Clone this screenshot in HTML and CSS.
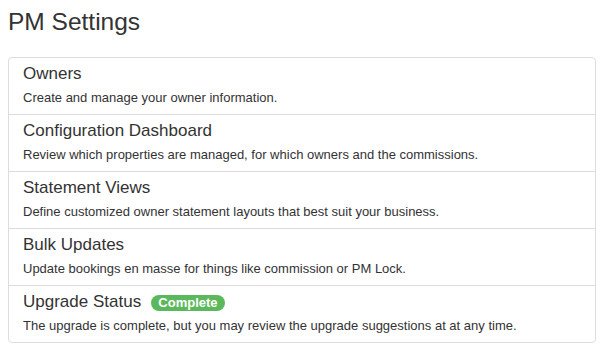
FILE: index.html
```html
<!DOCTYPE html>
<html lang="en">
<head>
<meta charset="utf-8">
<title>PM Settings</title>
<link rel="stylesheet" href="styles.css">
</head>
<body>
  <h1 class="page-title">PM Settings</h1>
  <div class="list-group">
    <div class="list-item">
      <h4 class="item-heading">Owners</h4>
      <p class="item-text">Create and manage your owner information.</p>
    </div>
    <div class="list-item">
      <h4 class="item-heading">Configuration Dashboard</h4>
      <p class="item-text">Review which properties are managed, for which owners and the commissions.</p>
    </div>
    <div class="list-item">
      <h4 class="item-heading">Statement Views</h4>
      <p class="item-text">Define customized owner statement layouts that best suit your business.</p>
    </div>
    <div class="list-item">
      <h4 class="item-heading">Bulk Updates</h4>
      <p class="item-text">Update bookings en masse for things like commission or PM Lock.</p>
    </div>
    <div class="list-item">
      <h4 class="item-heading">Upgrade Status <span class="badge">Complete</span></h4>
      <p class="item-text">The upgrade is complete, but you may review the upgrade suggestions at at any time.</p>
    </div>
  </div>
</body>
</html>
```

FILE: styles.css
```css
body {
  margin: 8px;
  background: #fff;
  color: #333;
  font-family: "Liberation Sans", Arial, sans-serif;
}

.page-title {
  margin: 0 0 22px 0;
  font-size: 24.5px;
  line-height: 27px;
  font-weight: normal;
  color: #333;
}

.list-group {
  margin-right: 3px;
  border: 1px solid #ddd;
  border-radius: 4px;
}

.list-item {
  padding: 6px 14px 7px 14px;
  border-bottom: 1px solid #ddd;
}

.list-item:last-child {
  border-bottom: none;
}

.item-heading {
  margin: 0 0 6px 0;
  font-size: 17px;
  line-height: 19px;
  font-weight: normal;
  color: #333;
}

.item-text {
  margin: 0;
  font-size: 13px;
  line-height: 18px;
  color: #333;
}

.badge {
  display: inline-block;
  margin-left: 5px;
  padding: 1.5px 7.5px;
  font-size: 13px;
  line-height: 13px;
  font-weight: bold;
  color: #fff;
  background: #5cb85c;
  border-radius: 8px;
  vertical-align: baseline;
}
```
